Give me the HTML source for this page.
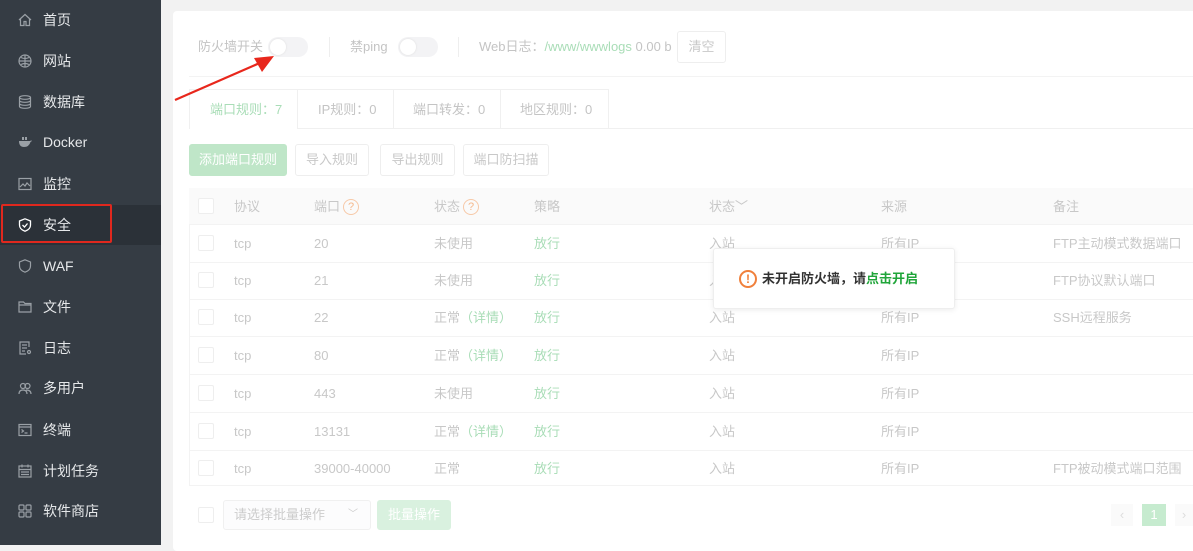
<!DOCTYPE html>
<html><head><meta charset="utf-8"><style>
*{margin:0;padding:0;box-sizing:border-box}
body{width:1193px;height:545px;overflow:hidden;background:#f2f2f2;font-family:"Liberation Sans","Noto Sans CJK SC",sans-serif;font-size:13px;line-height:16px;position:relative}
.sb{position:absolute;left:0;top:0;width:161px;height:545px;background:#353c44}
.it{position:absolute;left:0;width:161px;height:40px;color:#e6e8ea;font-size:14px;line-height:40px;padding-left:43px}
.it svg{position:absolute;left:18px;top:13px}
.act{background:#2b3138}
.card{position:absolute;left:173px;top:11px;width:1030px;height:540px;background:#fff;border-radius:4px}
.a{position:absolute;white-space:nowrap}
.g{color:#c4c4c4}.gr{color:#a9ddb7}
.tog{position:absolute;width:40px;height:20px;border-radius:10px;background:#f3f3f5}
.tog:after{content:"";position:absolute;left:2px;top:2px;width:16px;height:16px;border-radius:50%;background:#fff;box-shadow:0 0 2px #ddd}
.btn{position:absolute;height:32px;border:1px solid #eee;border-radius:3px;color:#c8c8c8;line-height:30px;text-align:center}
.cb{position:absolute;width:16px;height:16px;border:1px solid #eee;border-radius:2px;background:#fff}
.row{position:absolute;left:189px;width:1010px;border-bottom:1px solid #f3f3f3;height:38px}
.row span{position:absolute;top:11px;line-height:16px;height:16px;white-space:nowrap;color:#c8c8c8}
.row .gr{color:#a9ddb7}
.q{display:inline-block;width:16px;height:16px;border:1px solid #f7c9a8;border-radius:50%;color:#f5b88c;font-size:11px;line-height:14px;text-align:center;vertical-align:top;margin-left:3px;font-style:normal}
</style></head><body>
<div class="sb">
<div class="it" style="top:0"><svg width="14" height="14" viewBox="0 0 14 14" fill="none" stroke="#9aa0a6" stroke-width="1.2"><path d="M1 7L7 1.5 13 7M2.5 6v6.5h3.5v-4h2v4h3.5V6"/></svg>首页</div>
<div class="it" style="top:41px"><svg width="14" height="14" viewBox="0 0 14 14" fill="none" stroke="#9aa0a6" stroke-width="1.2"><circle cx="7" cy="7" r="6"/><path d="M1 7h12M7 1v12M3 3.5q4 2 8 0M3 10.5q4-2 8 0"/></svg>网站</div>
<div class="it" style="top:82px"><svg width="14" height="14" viewBox="0 0 14 14" fill="none" stroke="#9aa0a6" stroke-width="1.2"><ellipse cx="7" cy="2.5" rx="5.5" ry="1.8"/><path d="M1.5 2.5v9c0 1 2.5 1.8 5.5 1.8s5.5-.8 5.5-1.8v-9M1.5 5.5c0 1 2.5 1.8 5.5 1.8s5.5-.8 5.5-1.8M1.5 8.5c0 1 2.5 1.8 5.5 1.8s5.5-.8 5.5-1.8"/></svg>数据库</div>
<div class="it" style="top:122px"><svg width="14" height="14" viewBox="0 0 14 14" fill="#9aa0a6"><path d="M1 6h11q1.5-1 2 0-1 .5-1.5 1Q11 12 6 12 1 12 1 6z"/><rect x="4" y="2" width="2" height="3"/><rect x="7" y="2" width="2" height="3"/></svg>Docker</div>
<div class="it" style="top:164px"><svg width="14" height="14" viewBox="0 0 14 14" fill="none" stroke="#9aa0a6" stroke-width="1.2"><rect x="1" y="1.5" width="12" height="11"/><path d="M2 10l3-3 2 2 2-3 3 3"/></svg>监控</div>
<div class="it act" style="top:205px"><svg width="14" height="14" viewBox="0 0 14 14" fill="none" stroke="#fff" stroke-width="1.3"><path d="M7 .8L12.5 3v4c0 3-2.5 5.2-5.5 6.2C4 12.2 1.5 10 1.5 7V3z"/><path d="M4.5 7l2 2 3-3.5"/></svg>安全</div>
<div style="position:absolute;left:1px;top:204px;width:111px;height:39px;border:2px solid #e0281e;border-radius:2px"></div>
<div class="it" style="top:246px"><svg width="14" height="14" viewBox="0 0 14 14" fill="none" stroke="#9aa0a6" stroke-width="1.2"><path d="M7 .8L12.5 3v4c0 3-2.5 5.2-5.5 6.2C4 12.2 1.5 10 1.5 7V3z"/></svg>WAF</div>
<div class="it" style="top:287px"><svg width="14" height="14" viewBox="0 0 14 14" fill="none" stroke="#9aa0a6" stroke-width="1.2"><path d="M1 2h4.5l1.5 1.5h6v8.5H1zM1 5h12"/></svg>文件</div>
<div class="it" style="top:328px"><svg width="14" height="14" viewBox="0 0 14 14" fill="none" stroke="#9aa0a6" stroke-width="1.2"><path d="M11 6V1H2v12h6M4 4h5M4 7h5M4 10h3"/><circle cx="11" cy="11" r="1.5"/></svg>日志</div>
<div class="it" style="top:368px"><svg width="14" height="14" viewBox="0 0 14 14" fill="none" stroke="#9aa0a6" stroke-width="1.2"><circle cx="5" cy="5" r="2.5"/><circle cx="9.5" cy="5" r="2.5"/><path d="M1 13q0-4 4-4t4 4M8 9q5 0 5 4"/></svg>多用户</div>
<div class="it" style="top:410px"><svg width="14" height="14" viewBox="0 0 14 14" fill="none" stroke="#9aa0a6" stroke-width="1.2"><rect x="1" y="1.5" width="12" height="11"/><path d="M1 4h12M3.5 6.5l2 1.5-2 1.5M6.5 10h3"/></svg>终端</div>
<div class="it" style="top:451px"><svg width="14" height="14" viewBox="0 0 14 14" fill="none" stroke="#9aa0a6" stroke-width="1.2"><rect x="1" y="2" width="12" height="11"/><path d="M4 .5v3M10 .5v3M1 5.5h12M3 8h8M3 10.5h8"/></svg>计划任务</div>
<div class="it" style="top:491px"><svg width="14" height="14" viewBox="0 0 14 14" fill="none" stroke="#9aa0a6" stroke-width="1.2"><rect x="1" y="1" width="5" height="5" rx="1"/><rect x="8" y="1" width="5" height="5" rx="1"/><rect x="1" y="8" width="5" height="5" rx="1"/><rect x="8" y="8" width="5" height="5" rx="1"/></svg>软件商店</div>
</div>

<div class="card"></div>
<div class="a g" style="left:198px;top:39px">防火墙开关</div>
<div class="tog" style="left:268px;top:37px"></div>
<div style="position:absolute;left:329px;top:37px;width:1px;height:20px;background:#eee"></div>
<div class="a g" style="left:350px;top:39px">禁ping</div>
<div class="tog" style="left:398px;top:37px"></div>
<div style="position:absolute;left:458px;top:37px;width:1px;height:20px;background:#eee"></div>
<div class="a g" style="left:479px;top:39px">Web日志：<span class="gr">/www/wwwlogs</span> 0.00 b</div>
<div class="btn" style="left:677px;top:31px;width:49px">清空</div>
<div style="position:absolute;left:189px;top:76px;width:1004px;height:1px;background:#f3f3f3"></div>
<div style="position:absolute;left:189px;top:89px;width:420px;height:40px;border:1px solid #f0f0f0;border-bottom:none"></div>
<div style="position:absolute;left:297px;top:89px;width:1px;height:40px;background:#f0f0f0"></div>
<div style="position:absolute;left:393px;top:89px;width:1px;height:40px;background:#f0f0f0"></div>
<div style="position:absolute;left:500px;top:89px;width:1px;height:40px;background:#f0f0f0"></div>
<div style="position:absolute;left:297px;top:128px;width:896px;height:1px;background:#f0f0f0"></div>
<div class="a gr" style="left:210px;top:102px">端口规则：7</div>
<div class="a g" style="left:318px;top:102px">IP规则：0</div>
<div class="a g" style="left:413px;top:102px">端口转发：0</div>
<div class="a g" style="left:520px;top:102px">地区规则：0</div>
<div class="btn" style="left:189px;top:144px;width:98px;background:#bfe6c8;border-color:#bfe6c8;color:#fff">添加端口规则</div>
<div class="btn" style="left:295px;top:144px;width:74px">导入规则</div>
<div class="btn" style="left:380px;top:144px;width:75px">导出规则</div>
<div class="btn" style="left:463px;top:144px;width:86px">端口防扫描</div>
<div style="position:absolute;left:189px;top:188px;width:1010px;height:298px;border:1px solid #f3f3f3"></div>
<div class="row" style="top:188px;height:37px;background:#fafafa"><span style="left:45px">协议</span><span style="left:125px">端口<i class="q">?</i></span><span style="left:245px">状态<i class="q">?</i></span><span style="left:345px">策略</span><span style="left:520px">状态﹀</span><span style="left:692px">来源</span><span style="left:864px">备注</span></div>
<div class="cb" style="left:198px;top:198px"></div>

<div class="row" style="top:225px"><span style="left:45px">tcp</span><span style="left:125px">20</span><span style="left:245px">未使用</span><span style="left:345px" class="gr">放行</span><span style="left:520px">入站</span><span style="left:692px">所有IP</span><span style="left:864px">FTP主动模式数据端口</span></div>
<div class="row" style="top:262px"><span style="left:45px">tcp</span><span style="left:125px">21</span><span style="left:245px">未使用</span><span style="left:345px" class="gr">放行</span><span style="left:520px">入站</span><span style="left:692px">所有IP</span><span style="left:864px">FTP协议默认端口</span></div>
<div class="row" style="top:299px"><span style="left:45px">tcp</span><span style="left:125px">22</span><span style="left:245px">正常<b class="gr" style="font-weight:normal">（详情）</b></span><span style="left:345px" class="gr">放行</span><span style="left:520px">入站</span><span style="left:692px">所有IP</span><span style="left:864px">SSH远程服务</span></div>
<div class="row" style="top:337px"><span style="left:45px">tcp</span><span style="left:125px">80</span><span style="left:245px">正常<b class="gr" style="font-weight:normal">（详情）</b></span><span style="left:345px" class="gr">放行</span><span style="left:520px">入站</span><span style="left:692px">所有IP</span></div>
<div class="row" style="top:375px"><span style="left:45px">tcp</span><span style="left:125px">443</span><span style="left:245px">未使用</span><span style="left:345px" class="gr">放行</span><span style="left:520px">入站</span><span style="left:692px">所有IP</span></div>
<div class="row" style="top:413px"><span style="left:45px">tcp</span><span style="left:125px">13131</span><span style="left:245px">正常<b class="gr" style="font-weight:normal">（详情）</b></span><span style="left:345px" class="gr">放行</span><span style="left:520px">入站</span><span style="left:692px">所有IP</span></div>
<div class="row" style="top:450px;border-bottom:none"><span style="left:45px">tcp</span><span style="left:125px">39000-40000</span><span style="left:245px">正常</span><span style="left:345px" class="gr">放行</span><span style="left:520px">入站</span><span style="left:692px">所有IP</span><span style="left:864px">FTP被动模式端口范围</span></div>
<div class="cb" style="left:198px;top:235px"></div><div class="cb" style="left:198px;top:272px"></div><div class="cb" style="left:198px;top:309px"></div><div class="cb" style="left:198px;top:347px"></div><div class="cb" style="left:198px;top:385px"></div><div class="cb" style="left:198px;top:423px"></div><div class="cb" style="left:198px;top:460px"></div>
<div class="cb" style="left:198px;top:507px"></div>
<div style="position:absolute;left:223px;top:500px;width:148px;height:30px;border:1px solid #f0f0f0;border-radius:3px;background:#fcfcfd;color:#ccc;line-height:28px;padding-left:10px">请选择批量操作<span style="position:absolute;right:12px;font-size:10px">﹀</span></div>
<div class="btn" style="left:377px;top:500px;width:74px;height:30px;line-height:28px;background:#d9f1df;border-color:#d9f1df;color:#fff">批量操作</div>
<div style="position:absolute;left:1111px;top:504px;width:22px;height:22px;background:#fafafa;color:#ddd;text-align:center;line-height:22px">‹</div>
<div style="position:absolute;left:1142px;top:504px;width:24px;height:22px;background:#c6ebcf;color:#fff;text-align:center;line-height:22px">1</div>
<div style="position:absolute;left:1175px;top:504px;width:18px;height:22px;background:#fafafa;color:#ddd;text-align:center;line-height:22px">›</div>

<div style="position:absolute;left:713px;top:248px;width:242px;height:61px;background:#fff;border:1px solid #eee;border-radius:3px;box-shadow:0 1px 6px rgba(0,0,0,.08)"></div>
<div style="position:absolute;left:739px;top:270px;width:18px;height:18px;border:2px solid #f0803c;border-radius:50%;color:#f0803c;font-size:12px;font-weight:bold;text-align:center;line-height:14px">!</div>
<div class="a" style="left:762px;top:271px;font-weight:bold;color:#333;font-size:13px">未开启防火墙，请<span style="color:#20a53a">点击开启</span></div>

<svg style="position:absolute;left:170px;top:50px" width="110" height="55" viewBox="0 0 110 55"><path d="M5 50L92 12" stroke="#e8271c" stroke-width="2.2"/><path d="M104 6L84 8 92 22z" fill="#e8271c"/></svg>
</body></html>
